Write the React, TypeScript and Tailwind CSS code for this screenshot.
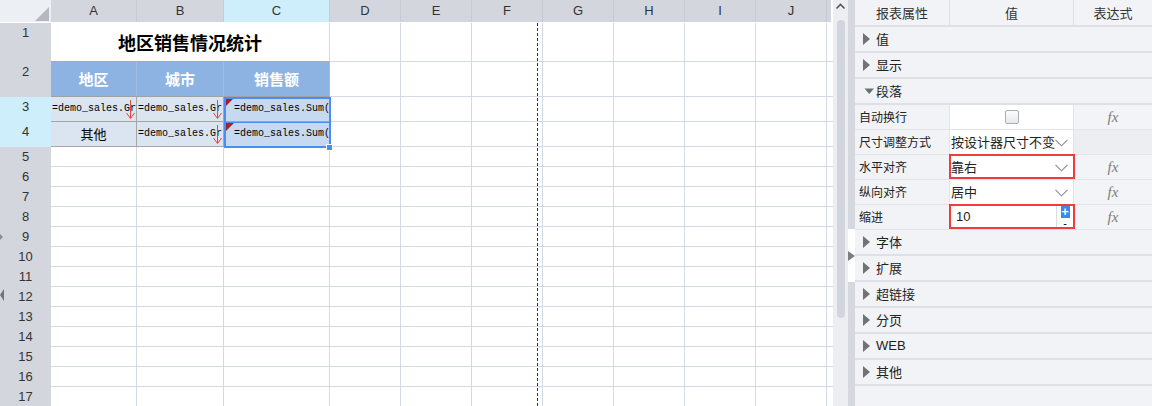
import React from "react";

const CJK = "font-['Noto_Sans_CJK_SC','Noto_Sans',sans-serif]";
const MONO = "font-['Liberation_Mono',monospace]";

const COLS = [
  { key: "A", w: "w-[86px]" },
  { key: "B", w: "w-[87px]" },
  { key: "C", w: "w-[106px]" },
  { key: "D", w: "w-[71px]" },
  { key: "E", w: "w-[71px]" },
  { key: "F", w: "w-[71px]" },
  { key: "G", w: "w-[71px]" },
  { key: "H", w: "w-[71px]" },
  { key: "I", w: "w-[71px]" },
  { key: "J", w: "w-[71px]" },
];
const EMPTY_COLS = COLS.slice(3);
const EMPTY_ROWS = [5, 6, 7, 8, 9, 10, 11, 12, 13, 14, 15, 16, 17];

const DownArrow = () => (
  <svg width="9" height="20" viewBox="0 0 9 20" className="absolute right-[1px] top-[3px]">
    <line x1="4.5" y1="0" x2="4.5" y2="18" stroke="#e2483d" strokeWidth="1" />
    <polyline points="0.5,13 4.5,18.5 8.5,13" fill="none" stroke="#e2483d" strokeWidth="1" />
  </svg>
);

const Corner = () => (
  <svg width="9" height="9" viewBox="0 0 9 9" className="absolute left-[1px] top-[1px]">
    <polygon points="0,0 9,0 0,9" fill="#a1242a" />
  </svg>
);

const RowHead = ({ n, h, active }: { n: number; h: string; active?: boolean }) => (
  <div
    className={`${h} w-[51px] shrink-0 text-center text-[13px] leading-[20px] text-[#333] font-['Liberation_Sans',sans-serif] ${
      active ? "bg-[#cdeefa]" : "bg-[#d3d7dd]"
    }`}
  >
    {n}
  </div>
);

const EmptyCells = () => (
  <>
    {EMPTY_COLS.map((c) => (
      <div key={c.key} className={`${c.w} h-full shrink-0 border-r border-b border-[#d3dae6]`} />
    ))}
    <div className="w-[6px] h-full shrink-0 border-b border-[#d3dae6]" />
  </>
);

const Sheet = () => (
  <div className="relative w-[833px] shrink-0 flex flex-col bg-white">
    {/* column header */}
    <div className="flex h-[23px] shrink-0 border-b border-white">
      <div className="relative w-[51px] shrink-0 bg-[#eceff3]">
        <svg width="14" height="14" viewBox="0 0 14 14" className="absolute right-[2px] bottom-[1px]">
          <polygon points="14,0 14,14 0,14" fill="#b5b9bf" />
        </svg>
      </div>
      {COLS.map((c) => (
        <div
          key={c.key}
          className={`${c.w} shrink-0 flex items-center justify-center border-r border-[#c6cad1] text-[13px] text-[#333] font-['Liberation_Sans',sans-serif] ${
            c.key === "C" ? "bg-[#cdeefa]" : "bg-[#d3d7dd]"
          }`}
        >
          {c.key}
        </div>
      ))}
      <div className="w-[4px] shrink-0 bg-[#d3d7dd]" />
    </div>

    {/* row 1 */}
    <div className="flex h-[39px] shrink-0">
      <RowHead n={1} h="h-[39px]" />
      <div
        className={`w-[279px] shrink-0 flex items-center justify-center border-r border-b border-r-[#d3dae6] border-b-[#a9a9a9] text-[18px] font-bold text-black ${CJK}`}
      >
        地区销售情况统计
      </div>
      <EmptyCells />
    </div>

    {/* row 2 */}
    <div className="flex h-[35px] shrink-0">
      <RowHead n={2} h="h-[35px]" />
      {["地区", "城市", "销售额"].map((t, i) => (
        <div
          key={t}
          className={`${COLS[i].w} shrink-0 flex items-center justify-center bg-[#8db3e2] border-r border-b border-r-[#a3bcdc] border-b-[#a0a0a0] text-[15px] font-bold text-white ${CJK}`}
        >
          {t}
        </div>
      ))}
      <EmptyCells />
    </div>

    {/* row 3 */}
    <div className="flex h-[25px] shrink-0">
      <RowHead n={3} h="h-[25px]" active />
      <div className={`relative w-[86px] shrink-0 overflow-hidden whitespace-nowrap bg-[#dbe5f1] border-r border-b border-[#a6a6a6] pl-[1px] text-[10px] leading-[24px] text-black ${MONO}`}>
        =demo_sales.Gr
        <DownArrow />
      </div>
      <div className={`relative w-[87px] shrink-0 overflow-hidden whitespace-nowrap bg-[#dbe5f1] border-r border-b border-[#a6a6a6] pl-[1px] text-[10px] leading-[24px] text-black ${MONO}`}>
        =demo_sales.Gr
        <DownArrow />
      </div>
      <div className={`relative w-[106px] shrink-0 overflow-hidden whitespace-nowrap bg-[#c6d9f1] border-b border-[#a6a6a6] pl-[10px] text-[10px] leading-[24px] text-black ${MONO}`}>
        <Corner />
        =demo_sales.Sum(
      </div>
      <EmptyCells />
    </div>

    {/* row 4 */}
    <div className="flex h-[25px] shrink-0">
      <RowHead n={4} h="h-[25px]" active />
      <div className={`w-[86px] shrink-0 flex items-center justify-center bg-[#dbe5f1] border-r border-b border-[#a6a6a6] text-[13px] text-black ${CJK}`}>
        其他
      </div>
      <div className={`relative w-[87px] shrink-0 overflow-hidden whitespace-nowrap bg-[#dbe5f1] border-r border-b border-[#a6a6a6] pl-[1px] text-[10px] leading-[24px] text-black ${MONO}`}>
        =demo_sales.Gr
        <DownArrow />
      </div>
      <div className={`relative w-[106px] shrink-0 overflow-hidden whitespace-nowrap bg-[#c6d9f1] border-b border-[#a6a6a6] pl-[10px] text-[10px] leading-[24px] text-black ${MONO}`}>
        <Corner />
        =demo_sales.Sum(
      </div>
      <EmptyCells />
    </div>

    {/* empty rows */}
    {EMPTY_ROWS.map((n) => (
      <div key={n} className="flex h-[20px] shrink-0">
        <RowHead n={n} h="h-[20px]" />
        <div className="w-[86px] h-full shrink-0 border-r border-b border-[#d3dae6]" />
        <div className="w-[87px] h-full shrink-0 border-r border-b border-[#d3dae6]" />
        <div className="w-[106px] h-full shrink-0 border-r border-b border-[#d3dae6]" />
        <EmptyCells />
      </div>
    ))}

    {/* selection C3:C4 */}
    <div className="absolute left-[224px] top-[97px] w-[107px] h-[51px] border-2 border-[#4d8cf4] pointer-events-none">
      <div className="absolute left-0 right-0 top-[23px] h-px bg-[#4d8cf4]" />
    </div>
    <div className="absolute left-[326px] top-[144px] w-[7px] h-[7px] bg-[#4d8cf4] border border-white" />

    {/* page break */}
    <div className="absolute left-[537px] top-[23px] bottom-0 w-px bg-[repeating-linear-gradient(to_bottom,#333_0_3px,transparent_3px_5px)]" />

    {/* edge markers */}
    <div className="absolute left-0 top-[234px] w-0 h-0 border-y-[3px] border-y-transparent border-l-[3px] border-l-[#8a8f96]" />
    <div className="absolute left-0 top-[289px] w-0 h-0 border-y-[6px] border-y-transparent border-r-[4px] border-r-[#6f747a]" />
  </div>
);

const Scrollbar = () => (
  <div className="w-[15px] shrink-0 bg-[#eceef1] flex flex-col items-center">
    <svg width="11" height="16" viewBox="0 0 11 16" className="shrink-0">
      <polyline points="1.5,8.5 5.5,4.5 9.5,8.5" fill="none" stroke="#555" strokeWidth="1.6" />
    </svg>
    <div className="mt-[4px] w-[8px] h-[298px] rounded-full bg-[#d2d6dc]" />
  </div>
);

const Strip = () => (
  <div className="w-[7px] shrink-0 bg-[#d5d9df] flex flex-col">
    <div className="h-[229px] shrink-0" />
    <div className="h-[53px] shrink-0 bg-white flex flex-col">
      <div className="h-[22px] shrink-0" />
      <div className="w-0 h-0 border-y-[5px] border-y-transparent border-l-[7px] border-l-[#7b7f85]" />
    </div>
  </div>
);

const Tri = ({ open }: { open?: boolean }) =>
  open ? (
    <svg width="13" height="12" viewBox="0 0 13 12" className="shrink-0">
      <polygon points="1.5,3.5 11,3.5 6.25,9" fill="#6b6e72" />
    </svg>
  ) : (
    <svg width="13" height="12" viewBox="0 0 13 12" className="shrink-0">
      <polygon points="0,0 7,6 0,12" fill="#707276" />
    </svg>
  );

const GroupRow = ({ label, open }: { label: string; open?: boolean }) => (
  <div className="h-[26px] shrink-0 flex items-center pl-[8px] border-b-2 border-[#dde0e6]">
    <Tri open={open} />
    <span className={`text-[13px] text-[#222] ${label === "WEB" ? "font-['Liberation_Sans',sans-serif]" : CJK}`}>{label}</span>
  </div>
);

const Fx = () => (
  <span className="font-['Liberation_Serif',serif] italic text-[15px] text-[#7d7d7d]">fx</span>
);

const Chevron = () => (
  <svg width="13" height="8" viewBox="0 0 13 8" className="absolute right-[5px] top-[9px]">
    <polyline points="0.5,0.8 6.5,6.8 12.5,0.8" fill="none" stroke="#8a8e94" strokeWidth="1.1" />
  </svg>
);

const RedBox = () => (
  <div className="absolute -left-[1px] -right-[2px] -top-[1px] bottom-0 border-2 border-[#f23b3b] pointer-events-none" />
);

const PropRow = ({
  label,
  children,
  fx = true,
  exprBg = "bg-[#f3f4f7]",
}: {
  label: string;
  children?: React.ReactNode;
  fx?: boolean;
  exprBg?: string;
}) => (
  <div className="h-[25px] shrink-0 flex border-b border-[#e1e4e9]">
    <div className={`w-[95px] shrink-0 flex items-center pl-[4px] border-r border-[#e1e4e9] text-[12px] text-[#222] ${CJK}`}>
      {label}
    </div>
    <div className={`relative w-[124px] shrink-0 bg-white border-r border-[#e1e4e9] text-[13px] text-[#222] ${CJK}`}>
      {children}
    </div>
    <div className={`flex-1 flex items-center justify-center ${exprBg}`}>{fx && <Fx />}</div>
  </div>
);

const Panel = () => (
  <div className="flex-1 flex flex-col bg-[#f2f3f6]">
    <div className={`h-[27px] shrink-0 flex border-b-2 border-[#dde0e6] text-[13px] text-[#333] ${CJK}`}>
      <div className="w-[95px] shrink-0 flex items-center justify-center border-r border-[#dde0e6]">报表属性</div>
      <div className="w-[124px] shrink-0 flex items-center justify-center border-r border-[#dde0e6]">值</div>
      <div className="flex-1 flex items-center justify-center">表达式</div>
    </div>
    <GroupRow label="值" />
    <GroupRow label="显示" />
    <GroupRow label="段落" open />
    <PropRow label="自动换行">
      <div className="h-full flex items-center justify-center">
        <div className="w-[14px] h-[14px] rounded-[2px] border border-[#a9adb3] bg-[linear-gradient(#fdfdfd,#e6e8eb)]" />
      </div>
    </PropRow>
    <PropRow label="尺寸调整方式" fx={false} exprBg="bg-[#eceef1]">
      <div className="h-full flex items-center pl-[1px] overflow-hidden whitespace-nowrap">按设计器尺寸不变</div>
      <Chevron />
    </PropRow>
    <PropRow label="水平对齐">
      <div className="h-full flex items-center pl-[1px]">靠右</div>
      <Chevron />
      <RedBox />
    </PropRow>
    <PropRow label="纵向对齐">
      <div className="h-full flex items-center pl-[1px]">居中</div>
      <Chevron />
    </PropRow>
    <PropRow label="缩进">
      <div className="h-full flex">
        <div className="flex-1 flex items-center pl-[6px] border-r border-[#d9dce1] font-['Liberation_Sans',sans-serif]">10</div>
        <div className="w-[16px] flex flex-col items-center pt-[1px]">
          <div className="w-[9px] h-[12px] bg-[#3a86f2] text-white text-[13px] leading-[11px] text-center font-bold font-['Liberation_Sans',sans-serif]">+</div>
          <div className="text-[11px] leading-[10px] text-black font-['Liberation_Sans',sans-serif]">-</div>
        </div>
      </div>
      <RedBox />
    </PropRow>
    <GroupRow label="字体" />
    <GroupRow label="扩展" />
    <GroupRow label="超链接" />
    <GroupRow label="分页" />
    <GroupRow label="WEB" />
    <GroupRow label="其他" />
  </div>
);

export default function App() {
  return (
    <div className="flex w-[1152px] h-[406px] overflow-hidden bg-white">
      <Sheet />
      <Scrollbar />
      <Strip />
      <Panel />
    </div>
  );
}
